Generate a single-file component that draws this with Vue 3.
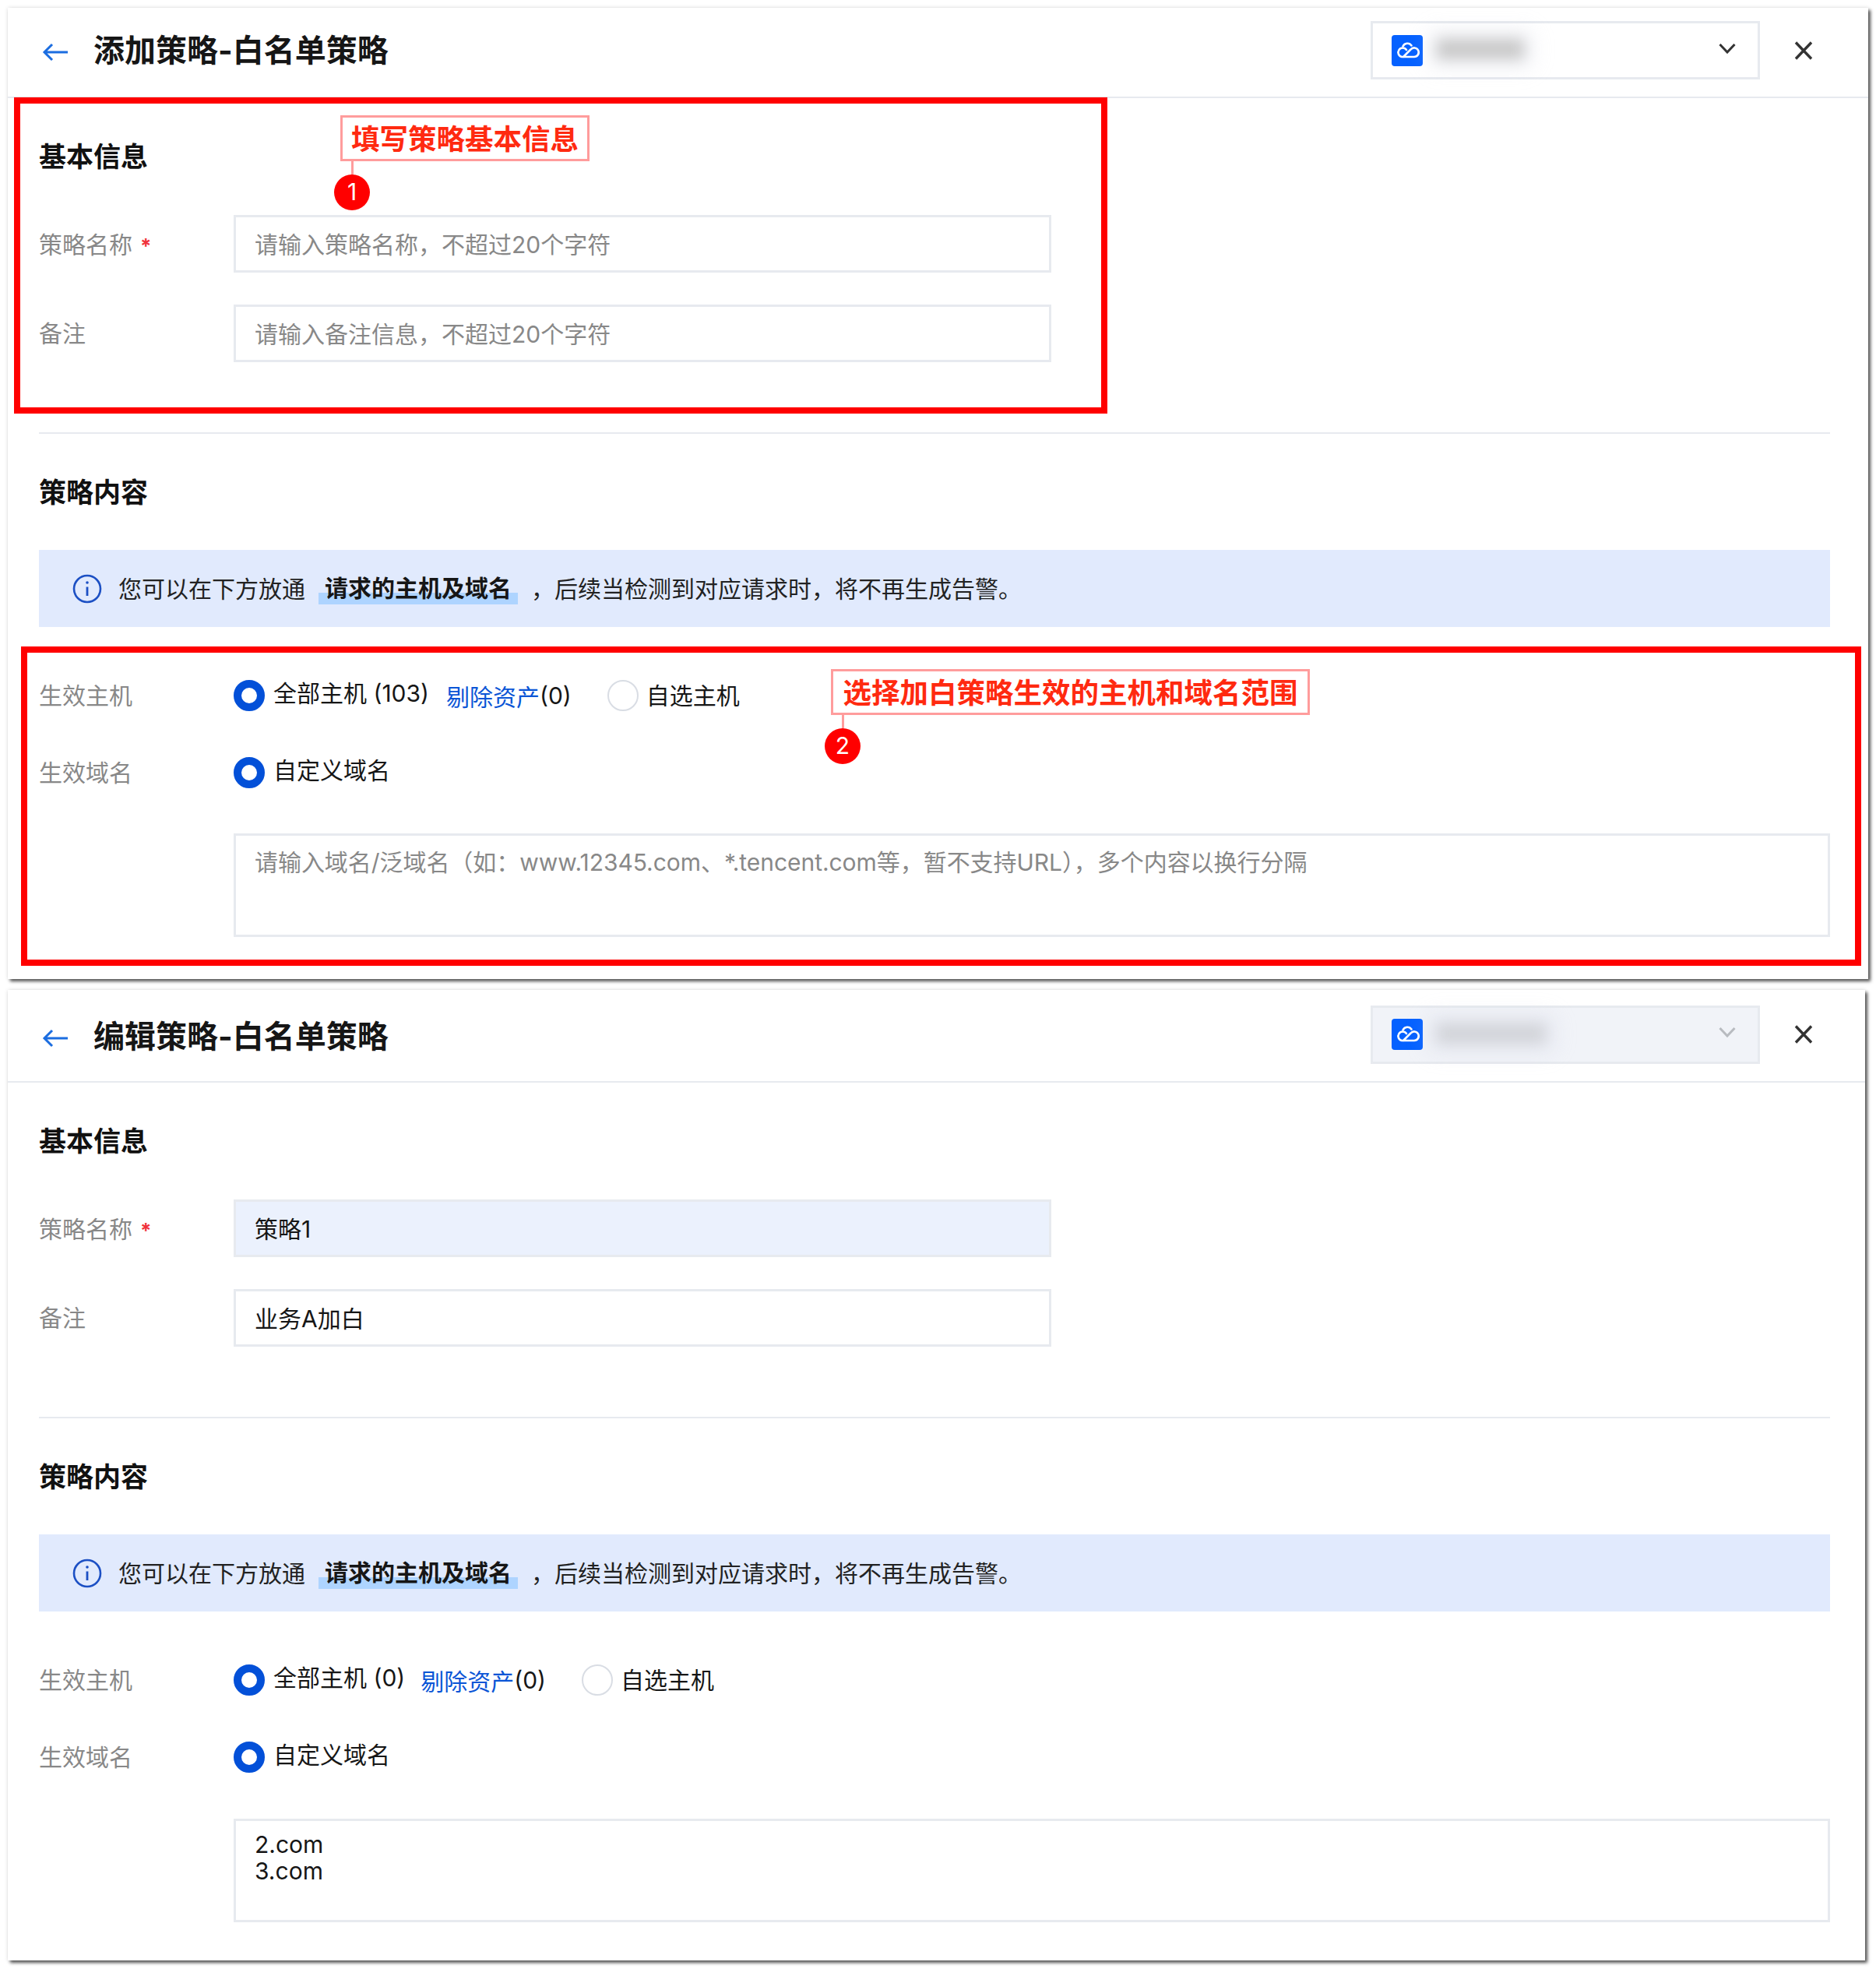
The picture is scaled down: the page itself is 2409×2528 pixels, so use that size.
<script setup>
const panels = [
  {
    id: 'add', title: '添加策略-白名单策略', disabled: false, hosts: '103', notes: true,
    name: '', remark: '', domains: [],
    namePh: '请输入策略名称，不超过20个字符', remarkPh: '请输入备注信息，不超过20个字符'
  },
  {
    id: 'edit', title: '编辑策略-白名单策略', disabled: true, hosts: '0', notes: false,
    name: '策略1', remark: '业务A加白', domains: ['2.com', '3.com'],
    namePh: '', remarkPh: ''
  }
]
</script>

<template>
  <div class="page">
    <section v-for="p in panels" :key="p.id" class="panel" :class="'panel-' + p.id">
      <header class="head">
        <svg class="back" viewBox="0 0 34 24" fill="none"><path d="M13 2 3 12l10 10M3 12h30" stroke="#1b6de0" stroke-width="3"/></svg>
        <h1 class="title">{{ p.title }}</h1>
        <div class="select" :class="{ off: p.disabled }">
          <svg class="logo" viewBox="0 0 40 40">
            <rect width="40" height="40" rx="4" fill="#0561ff"/>
            <g fill="none" stroke="#fff" stroke-width="2.600" stroke-linecap="round" stroke-linejoin="round">
              <path d="M14.500 14.500A6.300 6.300 0 0 1 25.500 13.500"/>
              <path d="M19 19A5.800 5.800 0 1 0 13 28H29A5.800 5.800 0 1 0 24.500 18.500L15 28"/>
            </g>
          </svg>
          <span class="blur"></span>
          <svg class="chev" viewBox="0 0 22 14" fill="none"><path d="m1.500 2 9.500 10 9.500-10" stroke-width="3"/></svg>
        </div>
        <svg class="close" viewBox="0 0 24 24" fill="none"><path d="m2 1.500 20 21M22 1.500l-20 21" stroke="#333" stroke-width="3.400"/></svg>
      </header>

      <div class="body">
        <h2 class="sec first">基本信息</h2>
        <div class="row">
          <label class="lab">策略名称<i class="star">*</i></label>
          <div class="field" :class="{ tinted: p.name }">
            <span v-if="p.name" class="val">{{ p.name }}</span>
            <span v-else class="ph">{{ p.namePh }}</span>
          </div>
        </div>
        <div class="row second">
          <label class="lab">备注</label>
          <div class="field">
            <span v-if="p.remark" class="val">{{ p.remark }}</span>
            <span v-else class="ph">{{ p.remarkPh }}</span>
          </div>
        </div>
        <div class="rule"></div>

        <h2 class="sec">策略内容</h2>
        <div class="banner">
          <svg class="info" viewBox="0 0 38 38" fill="none">
            <circle cx="19" cy="19" r="17" stroke="#1c50c4" stroke-width="2.600"/>
            <path d="M19 16.500V28" stroke="#1c50c4" stroke-width="2.800"/>
            <circle cx="19" cy="11" r="1.800" fill="#1c50c4"/>
          </svg>
          <span>您可以在下方放通</span>
          <b class="mark">请求的主机及域名</b>
          <span class="rest">，后续当检测到对应请求时，将不再生成告警。</span>
        </div>

        <div class="opt first-opt">
          <label class="lab">生效主机</label>
          <span class="radio on"></span>
          <span class="rtext up">全部主机 ({{ p.hosts }})</span>
          <a class="link">剔除资产</a><span class="rtext">(0)</span>
          <span class="radio gapl"></span>
          <span class="rtext">自选主机</span>
        </div>
        <div class="opt second-opt">
          <label class="lab">生效域名</label>
          <span class="radio on"></span>
          <span class="rtext up">自定义域名</span>
        </div>
        <div class="area" :class="{ filled: p.domains.length }">
          <template v-if="p.domains.length">
            <div v-for="d in p.domains" :key="d" class="val">{{ d }}</div>
          </template>
          <span v-else class="ph tight">请输入域名/泛域名（如：www.12345.com、*.tencent.com等，暂不支持URL），多个内容以换行分隔</span>
        </div>
      </div>

      <template v-if="p.notes">
        <div class="redbox box-a"></div>
        <div class="redbox box-b"></div>
        <div class="note note-a">
          <span>填写策略基本信息</span>
          <i class="stem"></i><b class="dot">1</b>
        </div>
        <div class="note note-b">
          <span>选择加白策略生效的主机和域名范围</span>
          <i class="stem"></i><b class="dot">2</b>
        </div>
      </template>
    </section>
  </div>
</template>

<style>
html, body { margin: 0; background: #fff; }
</style>

<style scoped>
.page {
  width: 2409px;
  height: 2528px;
  box-sizing: border-box;
  padding: 10px 0 0 10px;
  display: flex;
  flex-direction: column;
  gap: 14px;
  font-family: Inter, "Noto Sans CJK SC", sans-serif;
  color: #161616;
  background: #fff;
  overflow: hidden;
}
.panel {
  position: relative;
  box-sizing: border-box;
  height: 1247px;
  background: #fff;
  box-shadow: 3px 3px 4px rgba(0, 0, 0, .65), 0 0 5px rgba(0, 0, 0, .12);
}
.panel-add { width: 2389px; }
.panel-edit { width: 2385px; height: 1246px; }

.head {
  box-sizing: border-box;
  height: 116px;
  padding-bottom: 5px;
  border-bottom: 2px solid #e7eaef;
  display: flex;
  align-items: center;
}
.panel-edit .head { height: 119px; padding-bottom: 3px; }
.back { width: 34px; height: 24px; margin: 4px 0 0 44px; flex: none; }
.panel-edit .back { margin-top: 9px; }
.title {
  margin: 0 0 0 32px;
  font-size: 40px;
  line-height: 56px;
  font-weight: 700;
  width: 1640px;
  flex: none;
}
.panel-edit .title { margin-top: 5px; }
.select {
  box-sizing: border-box;
  width: 500px;
  height: 75px;
  flex: none;
  border: 3px solid #e7eaef;
  display: flex;
  align-items: center;
  padding-left: 24px;
}
.select.off { background: #f1f3f8; }
.logo { width: 40px; height: 40px; flex: none; }
.blur {
  width: 112px;
  height: 26px;
  margin: 0 0 4px 18px;
  background: #c9c9c9;
  filter: blur(9px);
  box-shadow: 0 0 20px 10px rgba(205, 210, 225, .3);
}
.select.off .blur { width: 140px; background: #d2d4d9; margin-bottom: 3px; }
.chev {
  width: 22px;
  height: 14px;
  margin-left: auto;
  margin-right: 28px;
  margin-bottom: 6px;
  stroke: #333;
}
.select.off .chev { stroke: #b8bbc0; }
.close { width: 24px; height: 24px; margin-left: 44px; flex: none; }

.body { width: 2300px; margin-left: 40px; }
.sec { margin: 0; font-size: 35px; line-height: 50px; font-weight: 700; color: #111; }
.sec.first { margin-top: 50px; }
.row { display: grid; grid-template-columns: 250px 1050px; align-items: center; margin-top: 50px; }
.row.second { margin-top: 41px; }
.row:not(.second) .lab { margin-top: 3px; }
.lab { font-size: 30px; line-height: 40px; color: #888; }
.star { font-style: normal; color: #f0323c; margin-left: 10px; font-size: 26px; font-weight: 700; }
.field {
  box-sizing: border-box;
  height: 74px;
  border: 3px solid #e7eaef;
  padding: 0 0 3px 24px;
  display: flex;
  align-items: center;
  font-size: 30px;
}
.field.tinted { background: #ebf1fd; }
.ph { color: #888; }
.ph.tight { letter-spacing: -0.05px; }
.val { color: #161616; }
.rule { height: 2px; background: #e7eaef; margin-top: 90px; }
.sec:not(.first) { margin-top: 50px; }

.banner {
  height: 99px;
  margin-top: 49px;
  background: #e1eafd;
  display: flex;
  align-items: center;
  padding-left: 43px;
  font-size: 30px;
  line-height: 40px;
  color: #222;
}
.info { width: 38px; height: 38px; margin-right: 21px; flex: none; }
.mark {
  margin-left: 17px;
  padding: 0 8px;
  font-weight: 700;
  color: #161616;
  background: linear-gradient(transparent 26px, #aed4ff 26px, #aed4ff 41px, transparent 41px);
  height: 41px;
}
.rest { margin-left: 17px; }

.opt { display: flex; align-items: center; height: 60px; font-size: 30px; }
.first-opt { margin-top: 58px; }
.second-opt { margin-top: 39px; }
.opt .lab { width: 250px; flex: none; }
.radio {
  box-sizing: border-box;
  width: 40px;
  height: 40px;
  border-radius: 50%;
  border: 2px solid #d9dde4;
  flex: none;
}
.radio.on { border: 10px solid #0350d8; margin-right: 11px; }
.radio.gapl { margin: 0 10px 0 46px; }
.rtext { color: #161616; line-height: 40px; }
.rtext.up { margin-bottom: 6px; }
.link { color: #0a55d6; margin-left: 22px; }
.panel-edit .link { margin-left: 20px; }

.area {
  box-sizing: border-box;
  width: 2050px;
  height: 133px;
  margin: 48px 0 0 250px;
  border: 3px solid #e7eaef;
  padding: 17px 24px;
  font-size: 30px;
  line-height: 35px;
}
.area.filled { margin-top: 49px; padding-top: 13px; line-height: 34px; }

.redbox { position: absolute; box-sizing: border-box; border: 8px solid #f00; }
.box-a { left: 8px; top: 115px; width: 1404px; height: 406px; }
.box-b { left: 17px; top: 820px; width: 2363px; height: 410px; }

.note {
  position: absolute;
  box-sizing: border-box;
  height: 59px;
  border: 3px solid #ff9c9c;
  background: #fff;
  color: #ff2a10;
  font-size: 36.500px;
  line-height: 56px;
  font-weight: 700;
  text-align: center;
  white-space: nowrap;
}
.note-a { left: 427px; top: 138px; width: 320px; }
.note-b { left: 1057px; top: 849px; width: 615px; }
.stem { position: absolute; left: 11px; top: 56px; width: 3px; height: 17px; background: #ff9c9c; }
.dot {
  position: absolute;
  left: -11px;
  top: 73px;
  width: 46px;
  height: 46px;
  border-radius: 50%;
  background: #f00;
  color: #fff;
  font-size: 30px;
  line-height: 44px;
  font-weight: 400;
  font-family: Inter, sans-serif;
}
</style>
